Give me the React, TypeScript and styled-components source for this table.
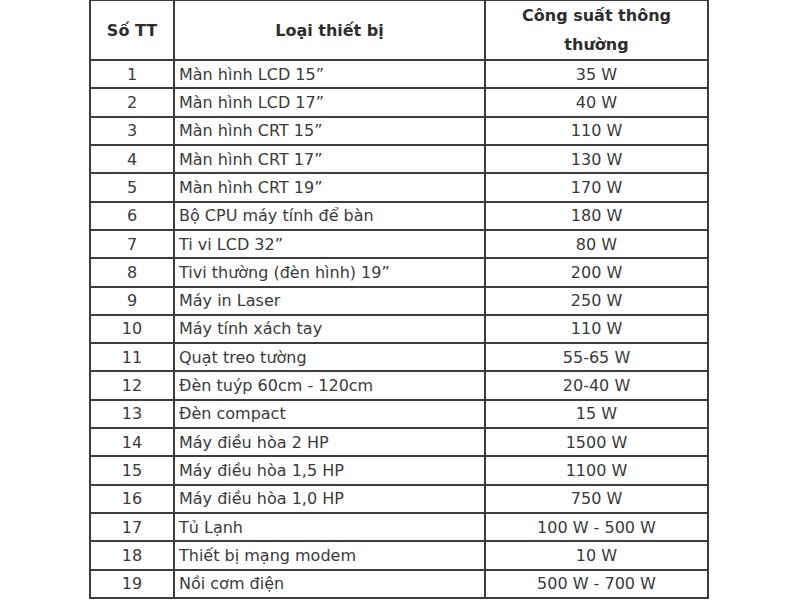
import React from 'react';
import styled, { createGlobalStyle } from 'styled-components';

const GlobalStyle = createGlobalStyle`
  html, body {
    margin: 0;
    padding: 0;
    background: #ffffff;
  }
  body {
    font-family: 'DejaVu Sans', Verdana, sans-serif;
    color: #333333;
  }
`;

const Page = styled.div`
  width: 800px;
  height: 600px;
  overflow: hidden;
  display: flex;
  justify-content: flex-start;
  padding-left: 89px;
  box-sizing: border-box;
`;

const Table = styled.table`
  border-collapse: collapse;
  table-layout: fixed;
  width: 618px;
  height: 599px;
  font-size: 16px;
  color: #3a3a3a;
`;

const HeadCell = styled.th<{ $width: number }>`
  width: ${({ $width }) => $width}px;
  height: 58px;
  border: 2px solid #3c3c3c;
  border-top-width: 1px;
  font-weight: bold;
  color: #2e2e2e;
  text-align: center;
  vertical-align: middle;
  line-height: 29px;
  padding: 0;
`;

const Cell = styled.td<{ $align?: 'left' | 'center' }>`
  height: 26px;
  border: 2px solid #3c3c3c;
  text-align: ${({ $align }) => $align ?? 'center'};
  padding: 0 ${({ $align }) => ($align === 'left' ? '4px' : '0')};
  vertical-align: middle;
  white-space: nowrap;
`;

const rows: [string, string][] = [
  ['Màn hình LCD 15”', '35 W'],
  ['Màn hình LCD 17”', '40 W'],
  ['Màn hình CRT 15”', '110 W'],
  ['Màn hình CRT 17”', '130 W'],
  ['Màn hình CRT 19”', '170 W'],
  ['Bộ CPU máy tính để bàn', '180 W'],
  ['Ti vi LCD 32”', '80 W'],
  ['Tivi thường (đèn hình) 19”', '200 W'],
  ['Máy in Laser', '250 W'],
  ['Máy tính xách tay', '110 W'],
  ['Quạt treo tường', '55-65 W'],
  ['Đèn tuýp 60cm - 120cm', '20-40 W'],
  ['Đèn compact', '15 W'],
  ['Máy điều hòa 2 HP', '1500 W'],
  ['Máy điều hòa 1,5 HP', '1100 W'],
  ['Máy điều hòa 1,0 HP', '750 W'],
  ['Tủ Lạnh', '100 W - 500 W'],
  ['Thiết bị mạng modem', '10 W'],
  ['Nồi cơm điện', '500 W - 700 W'],
];

const App = () => (
  <Page>
    <GlobalStyle />
    <Table>
      <thead>
        <tr>
          <HeadCell $width={82}>Số TT</HeadCell>
          <HeadCell $width={309}>Loại thiết bị</HeadCell>
          <HeadCell $width={221}>
            Công suất thông
            <br />
            thường
          </HeadCell>
        </tr>
      </thead>
      <tbody>
        {rows.map(([name, power], i) => (
          <tr key={name}>
            <Cell>{i + 1}</Cell>
            <Cell $align="left">{name}</Cell>
            <Cell>{power}</Cell>
          </tr>
        ))}
      </tbody>
    </Table>
  </Page>
);

export default App;
